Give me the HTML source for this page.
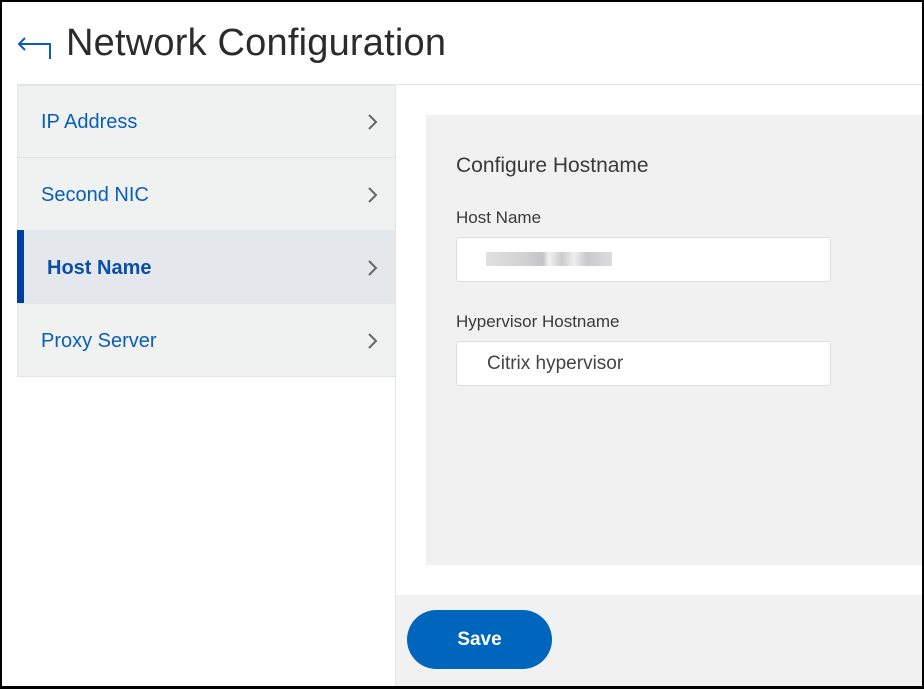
<!DOCTYPE html>
<html><head><style>
*{margin:0;padding:0;box-sizing:border-box}
body{width:924px;height:689px;background:#000;position:relative;overflow:hidden;font-family:"Liberation Sans",sans-serif}
.page{position:absolute;left:2px;top:2px;width:920px;height:684px;background:#fff;overflow:hidden}
.a{position:absolute}
</style></head><body>
<div class="page">
<svg class="a" style="left:15px;top:33px" width="36" height="28" viewBox="0 0 36 28"><path d="M8 3 L2 9 L8 15 M2 9 H33 V24" fill="none" stroke="#0a5fb4" stroke-width="2"/></svg>
<div class="a" style="left:64px;top:20px;font-size:38px;color:#2b2b2b;letter-spacing:0.2px">Network Configuration</div>
<div class="a" style="left:15px;top:82px;width:905px;height:1px;background:#e2e4e6"></div>
<div class="a" style="left:15px;top:83px;width:379px;height:292px;background:#f0f1f1;border:1px solid #e2e4e6"></div>
<div class="a" style="left:15px;top:155px;width:378px;height:1px;background:#e2e4e6"></div>
<div class="a" style="left:15px;top:228px;width:378px;height:73px;background:#e4e7eb"></div>
<div class="a" style="left:15px;top:228px;width:7px;height:73px;background:#003ea3"></div>
<div class="a" style="left:15px;top:301px;width:378px;height:1px;background:#e2e4e6"></div>
<div class="a" style="left:39px;top:109px;font-size:20px;color:#0a5fb4">IP Address</div>
<div class="a" style="left:39px;top:182px;font-size:20px;color:#0a5fb4">Second NIC</div>
<div class="a" style="left:45px;top:255px;font-size:20px;color:#0a4ea8;font-weight:bold">Host Name</div>
<div class="a" style="left:39px;top:328px;font-size:20px;color:#0a5fb4">Proxy Server</div>
<svg class="a" style="left:364px;top:110px" width="14" height="240" viewBox="0 0 14 240"><g fill="none" stroke="#666" stroke-width="2"><path d="M3 3 L10 10 L3 17"/><path d="M3 76 L10 83 L3 90"/><path d="M3 149 L10 156 L3 163"/><path d="M3 222 L10 229 L3 236"/></g></svg>
<div class="a" style="left:393px;top:83px;width:1px;height:601px;background:#e2e4e6"></div>
<div class="a" style="left:424px;top:113px;width:496px;height:450px;background:#f0f1f0"></div>
<div class="a" style="left:454px;top:152px;font-size:21px;color:#3a3a3a">Configure Hostname</div>
<div class="a" style="left:454px;top:206px;font-size:17px;color:#3a3a3a">Host Name</div>
<div class="a" style="left:454px;top:235px;width:375px;height:45px;background:#fff;border:1px solid #dcdcdc;border-radius:3px"></div>
<div class="a" style="left:484px;top:250px;width:126px;height:14px;background:linear-gradient(90deg,#e0e0e0,#d2d2d2 30%,#c4c4c8 45%,#f2f2f2 50%,#ccc 60%,#eee 70%,#c8c8cc 80%,#ddd)"></div>
<div class="a" style="left:454px;top:310px;font-size:17px;color:#3a3a3a">Hypervisor Hostname</div>
<div class="a" style="left:454px;top:339px;width:375px;height:45px;background:#fff;border:1px solid #dcdcdc;border-radius:3px"></div>
<div class="a" style="left:485px;top:351px;font-size:19px;color:#444">Citrix hypervisor</div>
<div class="a" style="left:394px;top:593px;width:526px;height:91px;background:#f0f1f0"></div>
<div class="a" style="left:405px;top:608px;width:145px;height:59px;background:#0065bd;border-radius:30px;color:#fff;font-weight:bold;font-size:19px;text-align:center;line-height:59px">Save</div>
</div>
</body></html>
